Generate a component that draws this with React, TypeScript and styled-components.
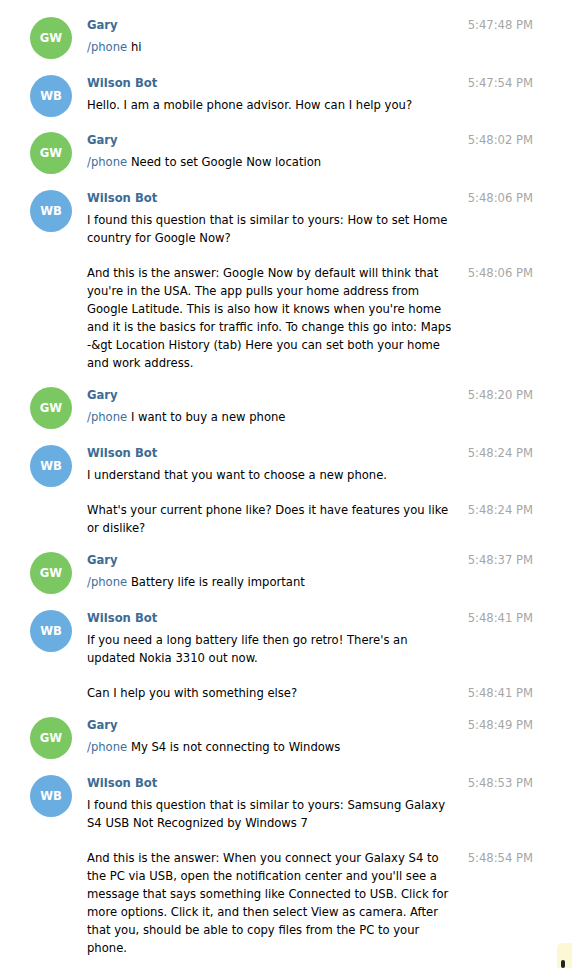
import React from "react";
import styled, { createGlobalStyle } from "styled-components";

const Global = createGlobalStyle`
  html, body { margin: 0; padding: 0; background: #ffffff; }
  body { font-family: "DejaVu Sans", Verdana, sans-serif; font-size: 11.6px; color: #000; }
`;

const Page = styled.div`
  position: relative;
  padding: 16px 0 0 30px;
  width: 503px;
  min-height: 952px;
`;

const Group = styled.div`
  display: flex;
  align-items: flex-start;
  margin-bottom: 14.5px;
`;

const Avatar = styled.div<{ $bg: string }>`
  flex: 0 0 42px;
  width: 42px;
  height: 42px;
  margin-top: 1px;
  border-radius: 50%;
  background: ${(p) => p.$bg};
  color: #fff;
  font-weight: bold;
  font-size: 11.6px;
  display: flex;
  align-items: center;
  justify-content: center;
`;

const Body = styled.div`
  flex: 1;
  margin-left: 15px;
  display: flex;
  flex-direction: column;
  gap: 17px;
`;

const Line = styled.div`
  display: flex;
  justify-content: space-between;
  align-items: flex-start;
  line-height: 18px;
`;

const Name = styled.div`
  font-weight: bold;
  color: #3d6b94;
`;

const Text = styled.div`
  flex: 0 0 360px;
  width: 360px;
`;

const TextRow = styled.div`
  white-space: nowrap;
`;

const Time = styled.div`
  color: #a6a6a6;
  white-space: nowrap;
`;

const Cmd = styled.span`
  color: #3e6f9c;
`;

const First = styled.div`
  display: flex;
  flex-direction: column;
  gap: 4px;
`;

const Corner = styled.div`
  position: absolute;
  left: 557px;
  top: 943px;
  width: 20px;
  height: 30px;
  background: #fdf8d4;
  border-top-left-radius: 5px;
`;

const CornerDot = styled.div`
  position: absolute;
  left: 4px;
  top: 17px;
  width: 4px;
  height: 8px;
  border-radius: 2px;
  background: #222;
`;

type Msg = { lines: React.ReactNode[]; time: string };
type G = { who: "gary" | "bot"; msgs: Msg[] };

const cmd = (t: string) => [
  <>
    <Cmd>/phone</Cmd> {t}
  </>,
];

const groups: G[] = [
  { who: "gary", msgs: [{ lines: cmd("hi"), time: "5:47:48 PM" }] },
  { who: "bot", msgs: [{ lines: ["Hello. I am a mobile phone advisor. How can I help you?"], time: "5:47:54 PM" }] },
  { who: "gary", msgs: [{ lines: cmd("Need to set Google Now location"), time: "5:48:02 PM" }] },
  {
    who: "bot",
    msgs: [
      {
        lines: ["I found this question that is similar to yours: How to set Home", "country for Google Now?"],
        time: "5:48:06 PM",
      },
      {
        lines: [
          "And this is the answer: Google Now by default will think that",
          "you're in the USA. The app pulls your home address from",
          "Google Latitude. This is also how it knows when you're home",
          "and it is the basics for traffic info. To change this go into: Maps",
          "-&gt Location History (tab) Here you can set both your home",
          "and work address.",
        ],
        time: "5:48:06 PM",
      },
    ],
  },
  { who: "gary", msgs: [{ lines: cmd("I want to buy a new phone"), time: "5:48:20 PM" }] },
  {
    who: "bot",
    msgs: [
      { lines: ["I understand that you want to choose a new phone."], time: "5:48:24 PM" },
      {
        lines: ["What's your current phone like? Does it have features you like", "or dislike?"],
        time: "5:48:24 PM",
      },
    ],
  },
  { who: "gary", msgs: [{ lines: cmd("Battery life is really important"), time: "5:48:37 PM" }] },
  {
    who: "bot",
    msgs: [
      {
        lines: ["If you need a long battery life then go retro! There's an", "updated Nokia 3310 out now."],
        time: "5:48:41 PM",
      },
      { lines: ["Can I help you with something else?"], time: "5:48:41 PM" },
    ],
  },
  { who: "gary", msgs: [{ lines: cmd("My S4 is not connecting to Windows"), time: "5:48:49 PM" }] },
  {
    who: "bot",
    msgs: [
      {
        lines: ["I found this question that is similar to yours: Samsung Galaxy", "S4 USB Not Recognized by Windows 7"],
        time: "5:48:53 PM",
      },
      {
        lines: [
          "And this is the answer: When you connect your Galaxy S4 to",
          "the PC via USB, open the notification center and you'll see a",
          "message that says something like Connected to USB. Click for",
          "more options. Click it, and then select View as camera. After",
          "that you, should be able to copy files from the PC to your",
          "phone.",
        ],
        time: "5:48:54 PM",
      },
    ],
  },
];

const MsgText = ({ lines }: { lines: React.ReactNode[] }) => (
  <Text>
    {lines.map((l, k) => (
      <TextRow key={k}>{l}</TextRow>
    ))}
  </Text>
);

export default function App() {
  return (
    <>
      <Global />
      <Page>
        {groups.map((g, i) => {
          const gary = g.who === "gary";
          return (
            <Group key={i}>
              <Avatar $bg={gary ? "#7bc863" : "#6aade0"}>{gary ? "GW" : "WB"}</Avatar>
              <Body>
                {g.msgs.map((m, j) =>
                  j === 0 ? (
                    <First key={j}>
                      <Line>
                        <Name>{gary ? "Gary" : "Wilson Bot"}</Name>
                        <Time>{m.time}</Time>
                      </Line>
                      <Line>
                        <MsgText lines={m.lines} />
                      </Line>
                    </First>
                  ) : (
                    <Line key={j}>
                      <MsgText lines={m.lines} />
                      <Time>{m.time}</Time>
                    </Line>
                  )
                )}
              </Body>
            </Group>
          );
        })}
        <Corner>
          <CornerDot />
        </Corner>
      </Page>
    </>
  );
}
